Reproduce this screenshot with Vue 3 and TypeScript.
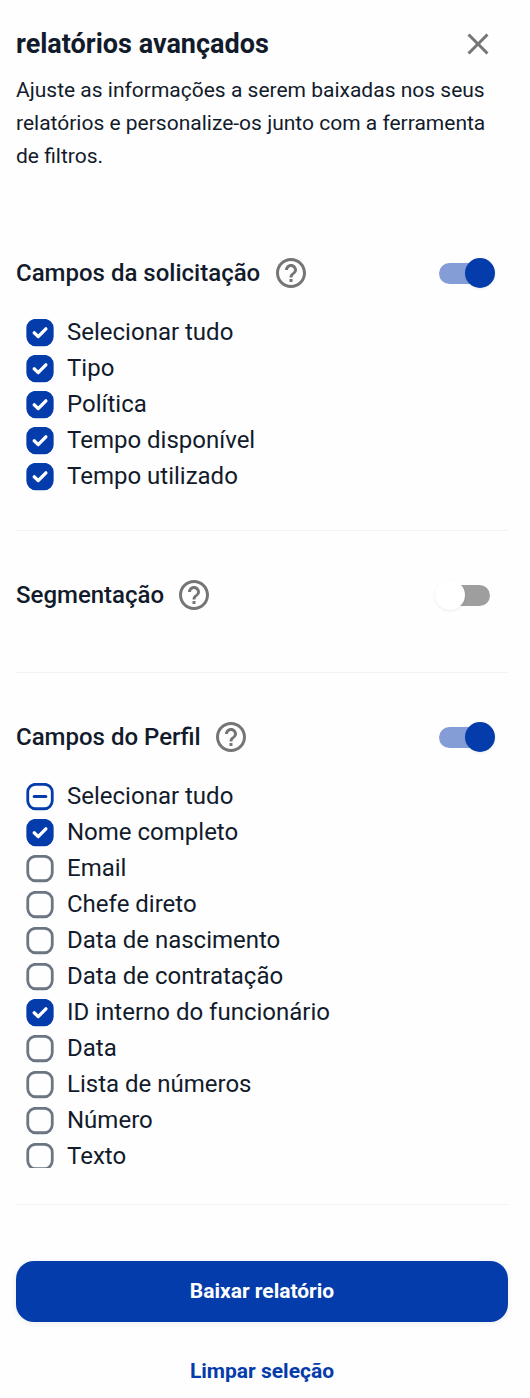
<script setup lang="ts">
import { ref } from 'vue'

type State = 'on' | 'off' | 'mixed'
interface Field { label: string; state: State }
interface Section { id: string; title: string; enabled: boolean; fields: Field[] }

const sections = ref<Section[]>([
  {
    id: 'request',
    title: 'Campos da solicitação',
    enabled: true,
    fields: [
      { label: 'Selecionar tudo', state: 'on' },
      { label: 'Tipo', state: 'on' },
      { label: 'Política', state: 'on' },
      { label: 'Tempo disponível', state: 'on' },
      { label: 'Tempo utilizado', state: 'on' },
    ],
  },
  { id: 'segmentation', title: 'Segmentação', enabled: false, fields: [] },
  {
    id: 'profile',
    title: 'Campos do Perfil',
    enabled: true,
    fields: [
      { label: 'Selecionar tudo', state: 'mixed' },
      { label: 'Nome completo', state: 'on' },
      { label: 'Email', state: 'off' },
      { label: 'Chefe direto', state: 'off' },
      { label: 'Data de nascimento', state: 'off' },
      { label: 'Data de contratação', state: 'off' },
      { label: 'ID interno do funcionário', state: 'on' },
      { label: 'Data', state: 'off' },
      { label: 'Lista de números', state: 'off' },
      { label: 'Número', state: 'off' },
      { label: 'Texto', state: 'off' },
    ],
  },
])

function toggleField(field: Field) {
  field.state = field.state === 'on' ? 'off' : 'on'
}
</script>

<template>
  <main class="panel">
    <header class="head">
      <h1 class="title">relatórios avançados</h1>
      <button class="close" type="button" aria-label="Fechar">
        <svg viewBox="0 0 24 24"><path d="M19 6.41 17.59 5 12 10.59 6.41 5 5 6.41 10.59 12 5 17.59 6.41 19 12 13.41 17.59 19 19 17.59 13.41 12z" /></svg>
      </button>
    </header>
    <p class="description">Ajuste as informações a serem baixadas nos seus relatórios e personalize-os junto com a ferramenta de filtros.</p>

    <section v-for="s in sections" :key="s.id" class="section" :class="s.id">
      <div class="section-head">
        <h2 class="section-title">{{ s.title }}</h2>
        <svg class="help" viewBox="0 0 24 24"><path d="M11 18h2v-2h-2v2zm1-16C6.48 2 2 6.48 2 12s4.480 10 10 10 10-4.480 10-10S17.520 2 12 2zm0 18c-4.410 0-8-3.590-8-8s3.590-8 8-8 8 3.590 8 8-3.590 8-8 8zm0-14c-2.210 0-4 1.790-4 4h2c0-1.100.9-2 2-2s2 .9 2 2c0 2-3 1.750-3 5h2c0-2.250 3-2.500 3-5 0-2.210-1.790-4-4-4z" /></svg>
        <button
          class="switch"
          :class="{ on: s.enabled }"
          type="button"
          role="switch"
          :aria-checked="s.enabled"
          :aria-label="s.title"
          @click="s.enabled = !s.enabled"
        ><span class="knob"></span></button>
      </div>
      <ul v-if="s.fields.length" class="fields">
        <li v-for="f in s.fields" :key="f.label" class="field" @click="toggleField(f)">
          <svg class="box" :class="f.state" viewBox="0 0 28 28">
            <rect class="frame" x="1.750" y="1.250" width="24.500" height="24.500" rx="8" />
            <path v-if="f.state === 'on'" class="mark" d="M8.200 13.800 12.200 17.600 19.900 9.800" />
            <path v-else-if="f.state === 'mixed'" class="mark" d="M8.200 13.500H19.800" />
          </svg>
          <span class="label">{{ f.label }}</span>
        </li>
      </ul>
    </section>

    <footer class="actions">
      <button class="primary" type="button">Baixar relatório</button>
      <button class="link" type="button">Limpar seleção</button>
    </footer>
  </main>
</template>

<style>
body {
  background: #fefefe;
}
</style>

<style scoped>
.panel {
  box-sizing: border-box;
  width: 530px;
  height: 1398px;
  overflow: hidden;
  padding: 26px 22px 0 16px;
  font-family: Roboto, "Liberation Sans", sans-serif;
  color: #121b2b;
}
button {
  border: 0;
  padding: 0;
  background: none;
  font: inherit;
  cursor: pointer;
}
.head {
  display: flex;
  align-items: center;
  justify-content: space-between;
  height: 36px;
  padding-right: 12px;
}
.title {
  margin: 0;
  font-size: 27px;
  font-weight: 700;
  line-height: 36px;
}
.close,
.close svg {
  display: block;
  width: 36px;
  height: 36px;
  fill: #757575;
}
.description {
  margin: 12px 0 0;
  font-size: 21px;
  line-height: 33px;
}
.section {
  box-sizing: border-box;
  border-bottom: 1px solid #f1f2f4;
}
.request {
  height: 276px;
  margin-top: 82px;
}
.segmentation {
  height: 142px;
  padding-top: 46px;
}
.profile {
  height: 532px;
  padding-top: 46px;
}
.section-head {
  display: flex;
  align-items: center;
  height: 36px;
}
.section-title {
  margin: 0;
  font-size: 24px;
  font-weight: 500;
  line-height: 36px;
}
.help {
  width: 36px;
  height: 36px;
  margin-left: 12.3px;
  fill: #757575;
}
.switch {
  position: relative;
  width: 51px;
  height: 21px;
  margin: 0 18px 0 auto;
  border-radius: 11px;
  background: #9e9e9e;
}
.knob {
  position: absolute;
  top: -5px;
  left: -4px;
  width: 30px;
  height: 30px;
  border-radius: 50%;
  background: #fff;
  box-shadow: 0 1px 3px rgba(0, 0, 0, 0.08);
}
.switch.on {
  background: #859dd6;
}
.on .knob {
  left: 26px;
  background: #053cab;
}
.fields {
  margin: 23px 0 0;
  padding: 0 0 0 10px;
  list-style: none;
}
.profile .fields {
  height: 390px;
  overflow: hidden;
}
.field {
  display: flex;
  align-items: center;
  height: 36px;
  cursor: pointer;
}
.box {
  display: block;
  flex: none;
  width: 28px;
  height: 28px;
  margin: 2px 13px 0 0;
  fill: none;
  stroke: #053cab;
  stroke-linecap: round;
  stroke-linejoin: round;
}
.frame {
  stroke-width: 2.8;
}
.mark {
  stroke-width: 3;
}
.box.off {
  stroke: #6c7683;
}
.box.on .frame {
  fill: #053cab;
}
.box.on .mark {
  stroke: #fff;
  stroke-width: 3.3;
}
.label {
  font-size: 24px;
  line-height: 24px;
  white-space: nowrap;
}
.actions {
  display: flex;
  flex-direction: column;
  padding-top: 56px;
}
.primary {
  height: 61px;
  padding-bottom: 2px;
  border-radius: 18px;
  background: #053cab;
  box-shadow: 0 1px 6px rgba(0, 0, 0, 0.08);
  color: #fff;
  font-size: 21px;
  font-weight: 700;
}
.link {
  height: 36px;
  margin-top: 31px;
  color: #053cab;
  font-size: 21px;
  font-weight: 700;
}
</style>
